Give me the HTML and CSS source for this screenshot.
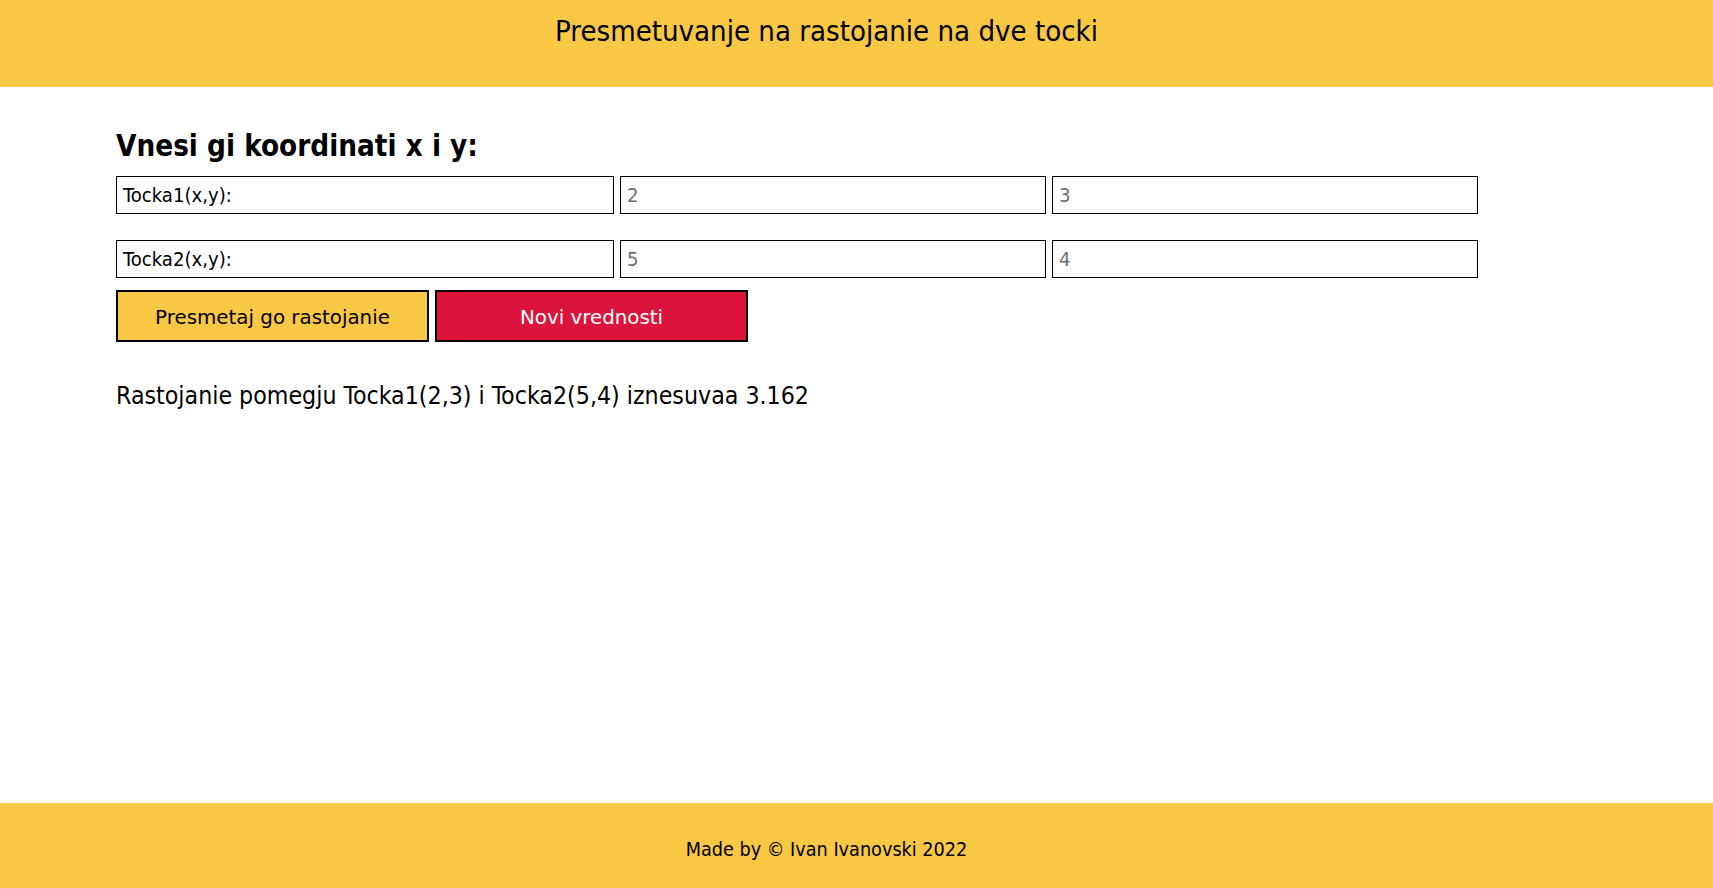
FILE: index.html
```html
<!DOCTYPE html>
<html lang="mk">
<head>
<meta charset="utf-8">
<title>Rastojanie</title>
<link rel="stylesheet" href="styles.css">
</head>
<body>
<header class="top">
  <h1 class="title">Presmetuvanje na rastojanie na dve tocki</h1>
</header>
<main class="content">
  <h2 class="prompt">Vnesi gi koordinati x i y:</h2>
  <div class="row">
    <input class="label-box" type="text" value="Tocka1(x,y):" readonly>
    <input class="coord" type="text" placeholder="2">
    <input class="coord" type="text" placeholder="3">
  </div>
  <div class="row">
    <input class="label-box" type="text" value="Tocka2(x,y):" readonly>
    <input class="coord" type="text" placeholder="5">
    <input class="coord" type="text" placeholder="4">
  </div>
  <div class="actions">
    <button class="btn btn-calc" type="button">Presmetaj go rastojanie</button>
    <button class="btn btn-reset" type="button">Novi vrednosti</button>
  </div>
  <p class="result">Rastojanie pomegju Tocka1(2,3) i Tocka2(5,4) iznesuvaa 3.162</p>
</main>
<footer class="bottom">
  <p class="credit">Made by © Ivan Ivanovski 2022</p>
</footer>
</body>
</html>
```
FILE: styles.css
```css
* { box-sizing: border-box; }
html, body { margin: 0; padding: 0; }
body {
  font-family: "DejaVu Sans Condensed", "DejaVu Sans", sans-serif;
  color: #000;
  background: #fff;
  min-height: 100vh;
  display: flex;
  flex-direction: column;
}
.top {
  background: #f8c744;
  height: 87px;
  padding: 14px 60px 0 0;
  text-align: center;
}
.title {
  margin: 0;
  font-weight: normal;
  font-size: 29.08px;
  line-height: 35px;
}
.content {
  flex: 1;
  padding: 0 0 0 116px;
}
.prompt {
  margin: 42px 0 12px;
  font-size: 29.35px;
  line-height: 35px;
  font-weight: bold;
}
.row {
  display: flex;
  gap: 6px;
  margin-bottom: 26px;
}
.row + .row { margin-bottom: 12px; }
.row input {
  height: 38px;
  border: 1px solid #000;
  border-radius: 0;
  padding: 0 6px;
  font-family: inherit;
  font-size: 20.16px;
  color: #000;
  background: #fff;
  outline: none;
}
.label-box { width: 498px; }
.coord { width: 426px; }
.coord::placeholder { color: #6e6e6e; opacity: 1; }
.actions {
  display: flex;
  gap: 6px;
}
.btn {
  width: 313px;
  height: 52px;
  border: 2px solid #000;
  border-radius: 0;
  padding: 3px 0 0;
  font-family: "DejaVu Sans", sans-serif;
  font-size: 19.85px;
  cursor: pointer;
}
.btn-calc { background: #f8c744; color: #000; }
.btn-reset { background: #dc143c; color: #fff; }
.result {
  margin: 39px 0 0;
  font-size: 24.7px;
  line-height: 29px;
}
.bottom {
  background: #f8c744;
  height: 85px;
  text-align: center;
  padding: 35px 60px 0 0;
}
.credit {
  margin: 0;
  font-size: 19.67px;
  line-height: 24px;
}
```
